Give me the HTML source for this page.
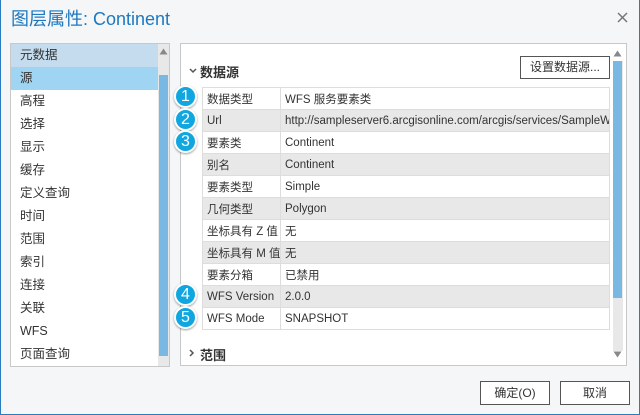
<!DOCTYPE html>
<html><head><meta charset="utf-8"><style>
*{margin:0;padding:0;box-sizing:border-box}
body{width:640px;height:415px;overflow:hidden;background:#f5f6f7;font-family:"Liberation Sans","Noto Sans CJK SC",sans-serif;font-size:12px;color:#333;position:relative}
.win{position:absolute;left:0;top:0;width:640px;height:415px;border:1px solid #2b7bc0;border-top:none}
.title{position:absolute;left:11px;top:5px;font-size:18px;color:#1e78c0}
.left{position:absolute;left:10px;top:43px;width:160px;height:324px;border:1px solid #c8c8c8;background:#fff}
.li{height:23px;line-height:23px;padding-left:9px;font-size:12.5px;color:#333}
.sb{position:absolute;background:#e8e8e8}
.thumb{position:absolute;background:#7ab8e4}
.right{position:absolute;left:180px;top:43px;width:447px;height:323px;border:1px solid #c8c8c8;background:#fff}
.h{position:absolute;font-weight:bold;font-size:13px;color:#333}
.btn{position:absolute;border:1px solid #555;background:#fff;text-align:center;font-size:12px;color:#333}
table{position:absolute;left:202px;top:87px;width:408px;border-collapse:collapse;border:1px solid #c8c8c8;table-layout:fixed}
td{height:22px;border:1px solid #ddd;padding-left:4px;font-size:11.5px;color:#333;white-space:nowrap;overflow:hidden}
tr:nth-child(even) td{background:#e8e8e8}
td.a{width:78px}
.bd{position:absolute;width:23px;height:23px;border-radius:50%;background:#10a6e0;border:2px solid #fff;color:#fff;font-size:16px;text-align:center;line-height:19px;box-shadow:0 1px 2px rgba(0,0,0,.4)}
</style></head><body>
<div class="win"></div>
<div class="title">图层属性: Continent</div>
<svg style="position:absolute;left:617px;top:12px" width="11" height="11"><path d="M1 1L10 10M10 1L1 10" stroke="#777" stroke-width="1.5"/></svg>
<div class="left">
<div class="li" style="background:#c5dcef">元数据</div>
<div class="li" style="background:#9fd4f2">源</div>
<div class="li">高程</div><div class="li">选择</div><div class="li">显示</div><div class="li">缓存</div><div class="li">定义查询</div><div class="li">时间</div><div class="li">范围</div><div class="li">索引</div><div class="li">连接</div><div class="li">关联</div><div class="li">WFS</div><div class="li">页面查询</div>
<div class="sb" style="left:147px;top:0;width:11px;height:322px"></div>
<div class="thumb" style="left:148px;top:31px;width:9px;height:281px"></div>
<svg style="position:absolute;left:148px;top:4px" width="9" height="7"><path d="M0.5 6.5L4.5 0.5L8.5 6.5Z" fill="#888"/></svg>
</div>
<div class="right">
<div class="sb" style="left:432px;top:17px;width:10px;height:290px"></div>
<div class="thumb" style="left:432px;top:17px;width:9px;height:237px"></div>
<svg style="position:absolute;left:432px;top:6px" width="9" height="7"><path d="M0.5 6.5L4.5 0.5L8.5 6.5Z" fill="#888"/></svg>
<svg style="position:absolute;left:432px;top:307px" width="9" height="7"><path d="M0.5 0.5L4.5 6.5L8.5 0.5Z" fill="#888"/></svg>
</div>
<svg style="position:absolute;left:189px;top:68px" width="8" height="6"><path d="M1 1L4 4L7 1" stroke="#555" stroke-width="1.5" fill="none"/></svg>
<div class="h" style="left:200px;top:62px">数据源</div>
<svg style="position:absolute;left:189px;top:349px" width="6" height="8"><path d="M1 1L4 4L1 7" stroke="#555" stroke-width="1.5" fill="none"/></svg>
<div class="h" style="left:200px;top:345px">范围</div>
<div class="btn" style="left:520px;top:56px;width:90px;height:23px;line-height:21px">设置数据源...</div>
<table>
<tr><td class="a">数据类型</td><td>WFS 服务要素类</td></tr>
<tr><td class="a">Url</td><td>http://sampleserver6.arcgisonline.com/arcgis/services/SampleW</td></tr>
<tr><td class="a">要素类</td><td>Continent</td></tr>
<tr><td class="a">别名</td><td>Continent</td></tr>
<tr><td class="a">要素类型</td><td>Simple</td></tr>
<tr><td class="a">几何类型</td><td>Polygon</td></tr>
<tr><td class="a">坐标具有 Z 值</td><td>无</td></tr>
<tr><td class="a">坐标具有 M 值</td><td>无</td></tr>
<tr><td class="a">要素分箱</td><td>已禁用</td></tr>
<tr><td class="a">WFS Version</td><td>2.0.0</td></tr>
<tr><td class="a">WFS Mode</td><td>SNAPSHOT</td></tr>
</table>
<div class="bd" style="left:174px;top:85px">1</div>
<div class="bd" style="left:174px;top:108px">2</div>
<div class="bd" style="left:174px;top:130px">3</div>
<div class="bd" style="left:174px;top:283px">4</div>
<div class="bd" style="left:174px;top:306px">5</div>
<div class="btn" style="left:480px;top:381px;width:70px;height:24px;line-height:22px">确定(O)</div>
<div class="btn" style="left:560px;top:381px;width:70px;height:24px;line-height:22px">取消</div>
</body></html>
